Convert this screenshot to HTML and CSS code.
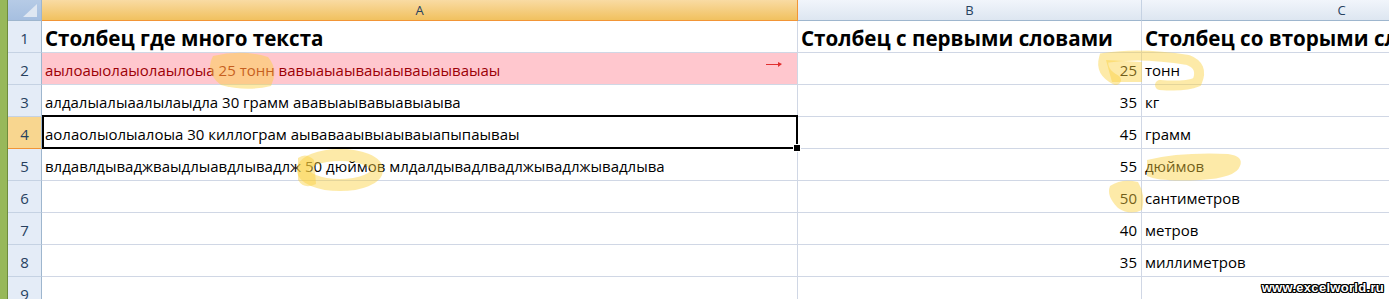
FILE: index.html
```html
<!DOCTYPE html>
<html lang="ru">
<head>
  <meta charset="UTF-8" />
  <title>Книга1</title>
  <link rel="stylesheet" href="styles.css">
</head>
<body>
  <div class="sheet">
    <div class="frame"></div>

    <div class="corner"><span class="corner-tri"></span></div>
    <div class="colhead selected">A</div>
    <div class="colhead">B</div>
    <div class="colhead">C</div>

    <div class="rowhead">1</div>
    <div class="cell title">Столбец где много текста</div>
    <div class="cell title">Столбец с первыми словами</div>
    <div class="cell title">Столбец со вторыми словами</div>

    <div class="rowhead">2</div>
    <div class="cell bad">аылоаыолаыолаылоыа 25 тонн вавыаыаываыаываыаываыаы<span class="arrow"></span></div>
    <div class="cell num">25</div>
    <div class="cell">тонн</div>

    <div class="rowhead">3</div>
    <div class="cell">алдалыалыаалылаыдла 30 грамм ававыаывавыавыаыва</div>
    <div class="cell num">35</div>
    <div class="cell">кг</div>

    <div class="rowhead selected">4</div>
    <div class="cell active">аолаолыолыалоыа 30 киллограм аывавааывыаываыапыпаываы</div>
    <div class="cell num">45</div>
    <div class="cell">грамм</div>

    <div class="rowhead">5</div>
    <div class="cell">влдавлдываджваыдлыавдлывадлж 50 дюймов млдалдывадлвадлжывадлжывадлыва</div>
    <div class="cell num">55</div>
    <div class="cell">дюймов</div>

    <div class="rowhead">6</div>
    <div class="cell"></div>
    <div class="cell num">50</div>
    <div class="cell">сантиметров</div>

    <div class="rowhead">7</div>
    <div class="cell"></div>
    <div class="cell num">40</div>
    <div class="cell">метров</div>

    <div class="rowhead">8</div>
    <div class="cell"></div>
    <div class="cell num">35</div>
    <div class="cell">миллиметров</div>

    <div class="rowhead">9</div>
    <div class="cell"></div>
    <div class="cell"></div>
    <div class="cell"></div>
  </div>

  <!-- marker strokes drawn over the screenshot -->
  <svg class="marker" width="1389" height="299" viewBox="0 0 1389 299">
    <path d="M213,56 Q242,49 268,57 Q279,70 271,86 Q246,92 221,85 Q204,72 213,56Z" />
    <ellipse cx="340" cy="170" rx="37" ry="15" class="ring thick" />
    <path d="M298,158 Q306,152 314,160 L316,184 Q304,190 298,180Z" />
    <path d="M1160,85 Q1185,87 1197,82 Q1204,66 1188,60 Q1140,52 1104,58 Q1100,72 1116,80" class="ring" />
    <path d="M1106,60 L1142,62 L1142,82 L1112,82Z" />
    <path d="M1147,160 Q1180,152 1228,154 Q1244,156 1240,166 Q1236,178 1200,180 Q1160,182 1147,176Z" />
    <path d="M1110,186 Q1122,178 1138,182 Q1146,195 1142,210 Q1130,216 1118,208 Q1106,196 1110,186Z" />
  </svg>

  <div class="watermark">www.excelworld.ru</div>
</body>
</html>
```

FILE: styles.css
```css
* {
  box-sizing: border-box;
}

body {
  margin: 0;
  width: 1389px;
  height: 299px;
  overflow: hidden;
  background: #ffffff;
  font-family: "Open Sans", sans-serif;
  position: relative;
}

.sheet {
  display: grid;
  grid-template-columns: 8px 34px 756px 344px 400px;
  grid-template-rows: 21px repeat(9, 32px);
  width: 1590px;
}

.frame {
  grid-row: 1 / -1;
  grid-column: 1;
  background: #97b85a;
  border-right: 1px solid #6e8c3c;
}

.corner {
  position: relative;
  background: linear-gradient(#b6cbe6, #a6bfe0);
  border-right: 1px solid #9eb6ce;
  border-bottom: 1px solid #9eb6ce;
}

.corner-tri {
  position: absolute;
  right: 4px;
  bottom: 3px;
  width: 0;
  height: 0;
  border-left: 14px solid transparent;
  border-bottom: 13px solid #dfe7f2;
}

.colhead {
  background: linear-gradient(#f1f5fb, #dde6f1);
  border-right: 1px solid #c5d2e3;
  border-bottom: 1px solid #9eb6ce;
  color: #27415f;
  font-size: 13px;
  text-align: center;
  line-height: 20px;
}

.colhead.selected {
  background: linear-gradient(#f9dba3, #f1c15f);
  border-right-color: #f29536;
  border-bottom-color: #f29536;
}

.rowhead {
  background: #e4ecf7;
  border-right: 1px solid #9eb6ce;
  border-bottom: 1px solid #c5d2e3;
  color: #27415f;
  font-size: 15px;
  line-height: 20px;
  text-align: center;
  display: flex;
  align-items: flex-end;
  justify-content: center;
  padding-bottom: 4px;
}

.rowhead.selected {
  background: #f8d68f;
  border-bottom-color: #f29536;
}

.cell {
  position: relative;
  border-right: 1px solid #d0d7e5;
  border-bottom: 1px solid #d0d7e5;
  display: flex;
  align-items: flex-end;
  padding: 0 3px 4px;
  font-size: 15px;
  line-height: 20px;
  color: #000;
  white-space: nowrap;
  overflow: hidden;
}

.cell.title {
  font-size: 20.6px;
  font-weight: bold;
  line-height: 24px;
  padding-bottom: 2px;
}

.cell.num {
  justify-content: flex-end;
  padding-right: 4px;
}

.cell.bad {
  background: #ffc7ce;
  color: #9c0006;
}

.arrow {
  position: absolute;
  left: 724px;
  top: 11px;
  width: 15px;
  height: 1px;
  background: #e03030;
}

.arrow::after {
  content: "";
  position: absolute;
  right: -1px;
  top: -2px;
  border-left: 4px solid #e03030;
  border-top: 2px solid transparent;
  border-bottom: 3px solid transparent;
}

.cell.active {
  overflow: visible;
}

.cell.active::before {
  content: "";
  position: absolute;
  left: 0;
  top: -2px;
  right: -1px;
  bottom: -1px;
  border: 2px solid #000;
}

.cell.active::after {
  content: "";
  position: absolute;
  right: -4px;
  bottom: -4px;
  width: 6px;
  height: 6px;
  background: #000;
  border: 1px solid #fff;
  z-index: 2;
}

.marker {
  position: absolute;
  left: 0;
  top: 0;
  pointer-events: none;
}

.marker path,
.marker ellipse {
  fill: #fbd03e;
  opacity: 0.45;
}

.marker .ring {
  fill: none;
  stroke: #fbd03e;
  stroke-width: 10;
  stroke-linecap: round;
}

.marker .thick {
  stroke-width: 12;
}

.watermark {
  position: absolute;
  right: 5px;
  bottom: 4px;
  font-family: "Liberation Sans", sans-serif;
  font-weight: bold;
  font-size: 13px;
  letter-spacing: 0.3px;
  color: #fff;
  text-shadow: -1px -1px 0 #000, 1px -1px 0 #000, -1px 1px 0 #000, 1px 1px 0 #000, 0 1px 0 #000, 1px 0 0 #000, 0 -1px 0 #000, -1px 0 0 #000;
}
```
